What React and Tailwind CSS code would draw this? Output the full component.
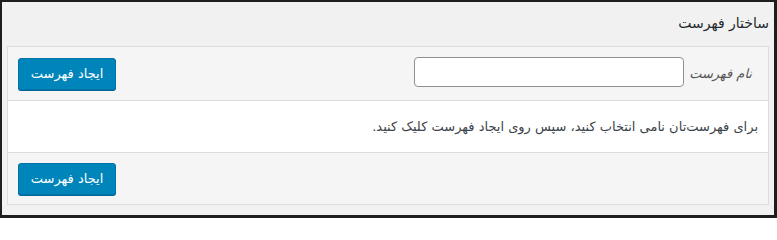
export default function App() {
  const font = { fontFamily: '"DejaVu Sans", "Noto Sans", sans-serif' };
  return (
    <div
      dir="rtl"
      className="w-[777px] h-[218px] bg-[#f1f1f1] border-t-2 border-l-2 border-r-[3px] border-b-[3px] border-[#1e1e1e] pl-[5px] pr-[5px] flex flex-col"
      style={font}
    >
      <div className="h-[44px] flex items-center text-[14px] text-[#23282d] pb-[1px]">
        ساختار فهرست
      </div>
      <div className="border border-[#dcdcde] flex flex-col">
        <div className="h-[53px] bg-[#f5f5f5] flex items-center justify-between pr-[16px] pl-[10px]">
          <div className="flex items-center gap-[5px]">
            <span className="text-[13px] italic text-[#555]">نام فهرست</span>
            <input
              type="text"
              className="w-[270px] h-[30px] bg-white border border-[#8c8f94] rounded-[4px] outline-none px-2 mt-[-3px]"
            />
          </div>
          <button className="w-[98px] h-[32px] bg-[#0085ba] border border-[#0073aa] rounded-[3px] text-white text-[13px] shadow-[0_1px_0_#006799] flex items-center justify-center">
            ایجاد فهرست
          </button>
        </div>
        <div className="h-[52px] bg-white border-t border-[#dcdcde] flex items-center pr-[10px] text-[13px] text-[#3c434a]">
          برای فهرست‌تان نامی انتخاب کنید، سپس روی ایجاد فهرست کلیک کنید.
        </div>
        <div className="h-[52px] bg-[#f5f5f5] border-t border-[#dcdcde] flex items-center justify-end pl-[10px] pt-[1px]">
          <button className="w-[98px] h-[32px] bg-[#0085ba] border border-[#0073aa] rounded-[3px] text-white text-[13px] shadow-[0_1px_0_#006799] flex items-center justify-center">
            ایجاد فهرست
          </button>
        </div>
      </div>
    </div>
  );
}
